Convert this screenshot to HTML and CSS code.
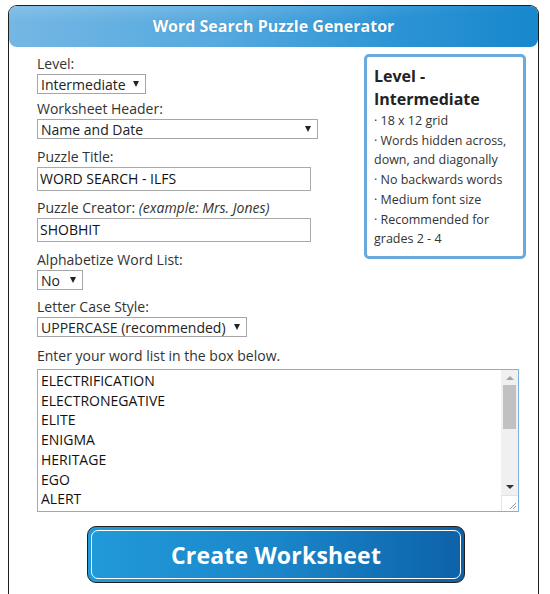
FILE: index.html
```html
<!DOCTYPE html>
<html>
<head>
<meta charset="utf-8">
<link rel="stylesheet" href="styles.css">
</head>
<body>
<div class="frame">
  <div class="header">Word Search Puzzle Generator</div>
  <div class="content">
    <div class="top">
      <div class="fields">
        <div class="group g-first">
          <div class="label">Level:</div>
          <div class="select w-level"><span>Intermediate</span><i class="arrow"></i></div>
        </div>
        <div class="group">
          <div class="label">Worksheet Header:</div>
          <div class="select w-header"><span>Name and Date</span><i class="arrow"></i></div>
        </div>
        <div class="group g-tight">
          <div class="label">Puzzle Title:</div>
          <div class="input">WORD SEARCH - ILFS</div>
        </div>
        <div class="group">
          <div class="label">Puzzle Creator: <em>(example: Mrs. Jones)</em></div>
          <div class="input">SHOBHIT</div>
        </div>
        <div class="group g-tight">
          <div class="label">Alphabetize Word List:</div>
          <div class="select w-no"><span>No</span><i class="arrow"></i></div>
        </div>
        <div class="group g-last">
          <div class="label">Letter Case Style:</div>
          <div class="select w-case"><span>UPPERCASE (recommended)</span><i class="arrow"></i></div>
        </div>
      </div>
      <div class="info">
        <div class="info-title">Level - Intermediate</div>
        <div class="info-item">· 18 x 12 grid</div>
        <div class="info-item">· Words hidden across, down, and diagonally</div>
        <div class="info-item">· No backwards words</div>
        <div class="info-item">· Medium font size</div>
        <div class="info-item">· Recommended for grades 2 - 4</div>
      </div>
    </div>
    <div class="label">Enter your word list in the box below.</div>
    <div class="textarea">
      <div class="words">
        <div>ELECTRIFICATION</div>
        <div>ELECTRONEGATIVE</div>
        <div>ELITE</div>
        <div>ENIGMA</div>
        <div>HERITAGE</div>
        <div>EGO</div>
        <div>ALERT</div>
      </div>
      <div class="scrollbar">
        <div class="sb-track">
          <i class="sb-up"></i>
          <div class="sb-thumb"></div>
          <div class="sb-fill"></div>
          <i class="sb-down"></i>
        </div>
        <div class="sb-corner">
          <svg width="16" height="16" viewBox="0 0 16 16"><path d="M14 8 L8 14 M14 11 L11 14" stroke="#999" stroke-width="1" fill="none"/></svg>
        </div>
      </div>
    </div>
    <div class="btn-row">
      <div class="button"><div class="button-inner">Create Worksheet</div></div>
    </div>
  </div>
</div>
</body>
</html>
```

FILE: styles.css
```css
html, body {
  margin: 0;
  padding: 0;
  background: #fff;
}
body {
  padding: 5px 0 0 8px;
  font-family: "Open Sans", "DejaVu Sans", sans-serif;
  color: #333;
}
.frame {
  width: 531px;
  height: 600px;
  box-sizing: border-box;
  border: 1px solid #1e1e1e;
  border-bottom: none;
  border-radius: 9px 9px 0 0;
}
.header {
  height: 41px;
  border-radius: 8px;
  background:
    radial-gradient(ellipse 120% 70% at 20% -10%, rgba(255,255,255,0.18), rgba(255,255,255,0) 70%),
    linear-gradient(to right, #74b7e4 0%, #55a9df 40%, #2a93d4 75%, #1887cc 100%);
  color: #fff;
  font-weight: 700;
  font-size: 16px;
  line-height: 41px;
  text-align: center;
  text-shadow: 0 0 1px rgba(0,0,0,0.25);
}
.content {
  padding: 7px 0 0 28px;
}
.top {
  display: flex;
  justify-content: space-between;
  align-items: flex-start;
}
.fields {
  display: flex;
  flex-direction: column;
}
.group {
  margin-bottom: 8px;
}
.g-first {
  margin-bottom: 5px;
}
.g-tight {
  margin-bottom: 7px;
}
.g-last {
  margin-bottom: 9px;
}
.label {
  font-size: 14px;
  line-height: 19px;
  color: #333;
  margin-bottom: 1px;
}
.label em {
  font-style: italic;
}
.select {
  box-sizing: border-box;
  height: 20px;
  border: 1px solid #a6a6a6;
  background: #fff;
  display: flex;
  align-items: center;
  justify-content: space-between;
  padding: 0 6px 0 3px;
  font-size: 14px;
  color: #222;
}
.arrow {
  width: 0;
  height: 0;
  border-left: 3.5px solid transparent;
  border-right: 3.5px solid transparent;
  border-top: 6px solid #222;
}
.w-level { width: 109px; }
.w-header { width: 281px; }
.w-no { width: 46px; }
.w-case { width: 210px; }
.input {
  box-sizing: border-box;
  width: 274px;
  height: 24px;
  border: 1px solid #a9a9a9;
  padding: 0 2px;
  font-size: 14px;
  line-height: 22px;
  color: #111;
}
.info {
  box-sizing: border-box;
  width: 162px;
  border: 3px solid #6aaadc;
  border-radius: 5px;
  padding: 8px 5px 7px 7px;
  margin-right: 12px;
  color: #333;
}
.info-title {
  font-weight: 700;
  font-size: 16px;
  line-height: 23px;
  color: #222;
}
.info-item {
  font-size: 12.5px;
  line-height: 19.7px;
}
.textarea {
  box-sizing: border-box;
  margin-top: 4px;
  width: 482px;
  height: 143px;
  border: 1px solid #7fb0e0;
  display: flex;
  justify-content: space-between;
  background: #fff;
}
.words {
  padding: 1px 0 0 3px;
  font-size: 14px;
  line-height: 19.7px;
  color: #111;
  overflow: hidden;
}
.scrollbar {
  width: 17px;
  display: flex;
  flex-direction: column;
}
.sb-track {
  flex: 1;
  background: #f0f0f0;
  display: flex;
  flex-direction: column;
  align-items: center;
}
.sb-up {
  margin-top: 6px;
  width: 0;
  height: 0;
  border-left: 4px solid transparent;
  border-right: 4px solid transparent;
  border-bottom: 4px solid #a3a3a3;
}
.sb-thumb {
  margin-top: 5px;
  width: 13px;
  height: 44px;
  background: #c1c1c1;
}
.sb-fill {
  flex: 1;
}
.sb-down {
  margin-bottom: 6px;
  width: 0;
  height: 0;
  border-left: 4px solid transparent;
  border-right: 4px solid transparent;
  border-top: 4px solid #333;
}
.sb-corner {
  height: 16px;
  background: #fff;
  border-top: 1px solid #e3e3e3;
  border-left: 1px solid #e3e3e3;
  box-sizing: border-box;
  display: flex;
  align-items: flex-end;
  justify-content: flex-end;
}
.sb-corner svg {
  display: block;
}
.btn-row {
  padding: 14px 0 0 50px;
}
.button {
  box-sizing: border-box;
  width: 378px;
  height: 57px;
  border: 1px solid #1f1f1f;
  border-radius: 9px;
  padding: 3px;
  background: linear-gradient(to right, #219ad9 0%, #1b86c9 50%, #0d61a8 100%);
}
.button-inner {
  box-sizing: border-box;
  height: 100%;
  border: 1.5px solid #fff;
  border-radius: 7px;
  color: #fff;
  font-weight: 700;
  font-size: 23px;
  display: flex;
  align-items: center;
  justify-content: center;
  letter-spacing: 0.2px;
}
```
